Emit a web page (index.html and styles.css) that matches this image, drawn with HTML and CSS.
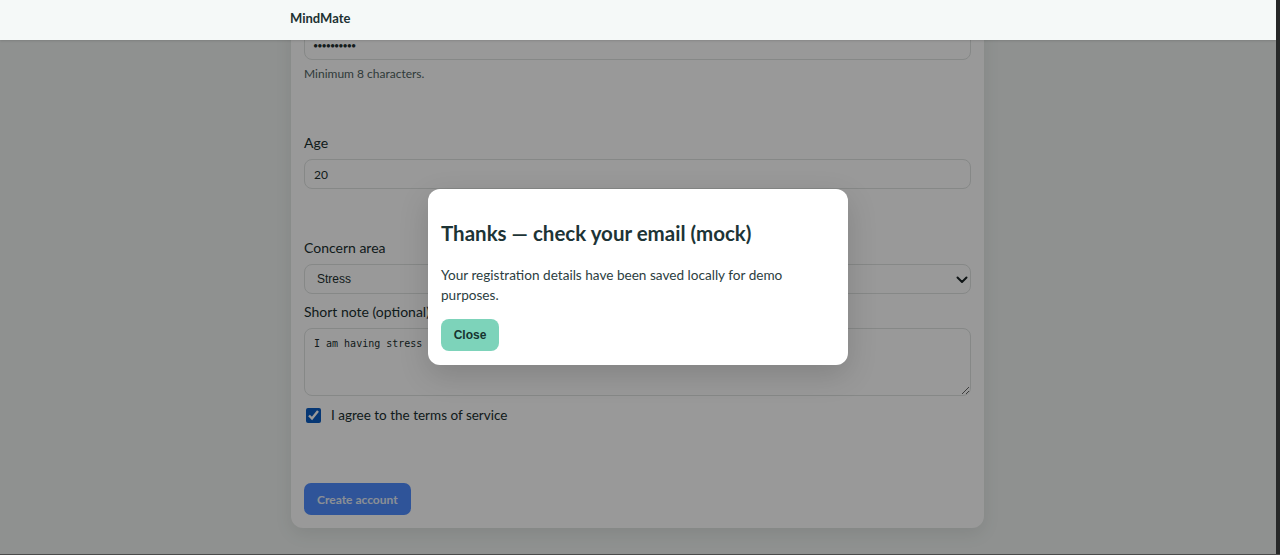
FILE: index.html
```html
<!DOCTYPE html>
<html lang="en">
<head>
<meta charset="utf-8">
<title>MindMate — Register</title>
<link rel="stylesheet" href="styles.css">
</head>
<body>
<div class="screen">
  <div class="viewport">
    <header class="navbar">
      <div class="nav-inner"><span class="brand">MindMate</span></div>
    </header>
    <main class="page">
      <form class="card">
        <div class="field field-password">
          <input class="input input-password" type="password" value="passwords1">
          <p class="hint">Minimum 8 characters.</p>
        </div>
        <div class="field field-age">
          <label class="label">Age</label>
          <input class="input" type="text" value="20">
        </div>
        <div class="field field-concern">
          <label class="label">Concern area</label>
          <div class="select-wrap">
            <select class="input select"><option>Stress</option></select>
            <svg class="chevron" width="12" height="8" viewBox="0 0 12 8"><path d="M1.5 1.5 L6 6 L10.5 1.5" fill="none" stroke="#1b2426" stroke-width="2" stroke-linecap="round" stroke-linejoin="round"/></svg>
          </div>
        </div>
        <div class="field field-note">
          <label class="label">Short note (optional)</label>
          <textarea class="input textarea">I am having stress and anxiety about exams lately.</textarea>
        </div>
        <label class="check-row">
          <input class="checkbox" type="checkbox" checked>
          <span>I agree to the terms of service</span>
        </label>
        <div class="actions">
          <button type="button" class="btn-primary">Create account</button>
        </div>
      </form>
    </main>
    <div class="backdrop">
      <div class="modal" role="dialog">
        <h2 class="modal-title">Thanks — check your email (mock)</h2>
        <p class="modal-text">Your registration details have been saved locally for demo purposes.</p>
        <button type="button" class="btn-close">Close</button>
      </div>
    </div>
  </div>
  <div class="scroll-strip"></div>
</div>
</body>
</html>
```

FILE: styles.css
```css
* { box-sizing: border-box; }
html, body { margin: 0; padding: 0; height: 100%; overflow: hidden; }
body {
  font-family: "Lato", "Noto Sans", sans-serif;
  color: #1f3536;
  background: #2b2b2b;
}
.screen {
  display: flex;
  height: 555px;
  border-bottom: 1px solid #4a4a4a;
}
.viewport {
  position: relative;
  flex: 1;
  background: #eef2f0;
  overflow: hidden;
}
.scroll-strip {
  width: 4px;
  background: #262828;
}
.navbar {
  position: absolute;
  top: 0; left: 0; right: 0;
  height: 40px;
  background: #f5f9f8;
  box-shadow: 0 1px 2px rgba(0,0,0,0.12);
  z-index: 20;
}
.nav-inner {
  width: 696px;
  margin: 0 auto;
  height: 40px;
  display: flex;
  align-items: center;
}
.brand {
  font-size: 13px;
  font-weight: 700;
  color: #1d3233;
  position: relative;
  top: -2px;
}
.page {
  padding-top: 17px;
  padding-right: 1px;
}
.card {
  width: 693px;
  margin: 0 auto;
  background: #fff;
  border-radius: 12px;
  padding: 13px 13px 13px;
  box-shadow: 0 6px 18px rgba(0,0,0,0.08);
  display: flex;
  flex-direction: column;
}
.field { display: flex; flex-direction: column; }
.label {
  font-size: 14px;
  line-height: 20px;
  color: #1a2f30;
  margin-bottom: 6px;
}
.input {
  font-family: inherit;
  width: 100%;
  height: 30px;
  border: 1px solid #dfe3e2;
  border-radius: 8px;
  background: #fff;
  padding: 0 9px;
  font-size: 12px;
  color: #22302f;
  outline: none;
}
.input-password { font-size: 9px; letter-spacing: -1px; padding-left: 8px; }
.hint {
  margin: 6px 0 0;
  font-size: 12px;
  line-height: 16px;
  color: #4f6362;
}
.field-age { margin-top: 51px; }
.field-concern { margin-top: 49px; }
.field-note { margin-top: 8px; }
.select-wrap { position: relative; }
.select {
  appearance: none;
  -webkit-appearance: none;
  font-family: "Liberation Sans", Arial, sans-serif;
  padding-left: 12px;
}
.chevron { position: absolute; right: 3px; top: 12px; }
.textarea {
  height: 68px;
  resize: vertical;
  padding: 8px 9px;
  font-family: "DejaVu Sans Mono", monospace;
  font-size: 10px;
  line-height: 14px;
  display: block;
}
.check-row {
  margin-top: 9px;
  display: flex;
  align-items: center;
  gap: 10px;
  height: 20px;
  font-size: 13.5px;
  color: #1a2f30;
}
.checkbox {
  margin: 0 0 0 2px;
  width: 15px; height: 15px;
  accent-color: #0a5cc2;
}
.actions { margin-top: 58px; }
.btn-primary {
  font-family: inherit;
  height: 32px;
  padding: 0 13px;
  border: none;
  border-radius: 7px;
  background: #4f8cff;
  color: #e6eef9;
  font-weight: 700;
  font-size: 12px;
}
.backdrop {
  position: absolute;
  inset: 0;
  background: rgba(0,0,0,0.4);
  z-index: 10;
  display: flex;
  align-items: center;
  justify-content: center;
}
.modal {
  width: 420px;
  background: #fff;
  border-radius: 12px;
  padding: 30px 24px 14px 13px;
  box-shadow: 0 10px 30px rgba(0,0,0,0.15);
}
.modal-title {
  margin: 0;
  font-size: 20.5px;
  line-height: 28px;
  font-weight: 700;
  color: #1d3436;
}
.modal-text {
  margin: 18px 0 14px;
  font-size: 13.6px;
  line-height: 20px;
  color: #2c3e3f;
}
.btn-close {
  font-family: "Liberation Sans", Arial, sans-serif;
  height: 32px;
  width: 58px;
  border: none;
  border-radius: 8px;
  background: #7dd3ba;
  color: #173430;
  font-weight: 700;
  font-size: 12px;
}
```
